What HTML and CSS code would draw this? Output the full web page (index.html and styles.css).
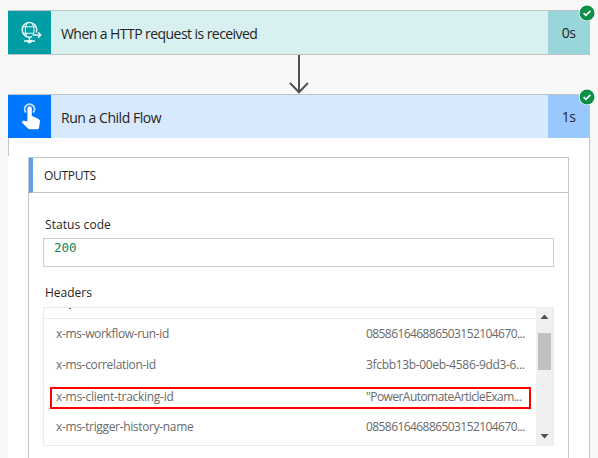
FILE: index.html
```html
<!DOCTYPE html>
<html lang="en">
<head>
<meta charset="utf-8">
<title>Flow run</title>
<link rel="stylesheet" href="styles.css">
</head>
<body>
<main class="flow">
  <section class="card trigger">
    <div class="icon">
      <svg width="43" height="43" viewBox="0 0 43 43" fill="none" stroke="#e4f8f7" stroke-width="1.4">
        <path d="M28.300 21.500A7.300 7.300 0 1 0 24 25.700"/>
        <path d="M19 12c-2 4.200-2 9.800 0 14M24 12c2 3.500 2.400 7 1.800 10.500M14.500 15.700h13.500M14.500 22.200h11.500" stroke-width="1.100"/>
        <path d="M24.500 24h8M30 21.300l2.800 2.700-2.800 2.700"/>
        <path d="M21.500 26v3" stroke-width="1.600"/>
        <path d="M16 30h3M24 30h3" stroke-width="1.600"/>
        <path d="M18.800 29h5.400v2l-2.700 1.800-2.700-1.800z" fill="#e4f8f7" stroke="none"/>
      </svg>
    </div>
    <h2 class="title title-http">When a HTTP request is received</h2>
    <div class="time">0s</div>
    <svg class="check" width="18" height="18" viewBox="0 0 18 18"><circle cx="9" cy="9" r="8.300" fill="#fff"/><circle cx="9" cy="9" r="7.500" fill="#0b9048"/><path d="M5.600 9.200l2.300 2.200 4.500-4.500" fill="none" stroke="#fff" stroke-width="1.700"/></svg>
  </section>
  <div class="connector">
    <svg width="22" height="39" viewBox="0 0 22 39" fill="none" stroke="#505050" stroke-width="2"><path d="M11 0v37M2 28l9 9.300 9-9.300"/></svg>
  </div>
  <section class="card action">
    <div class="icon">
      <svg width="43" height="43" viewBox="0 0 43 43" fill="#fff">
        <path d="M18 17.500A4.900 4.900 0 1 1 25.200 17.500" fill="none" stroke="#c5e0ff" stroke-width="1.900"/>
        <path d="M19.400 13.400a2.200 2.200 0 0 1 4.400 0v7.900h1l5.700 2.800c1 .5 1.500 1.300 1.400 2.300l-.8 6c-.2 1.200-1 1.900-2.100 1.900h-7.300c-.7 0-1.200-.2-1.700-.7l-6.300-6.300 1-1.200c.4-.4.9-.5 1.400-.4l3.300.8z"/>
      </svg>
    </div>
    <h2 class="title title-child">Run a Child Flow</h2>
    <div class="time">1s</div>
    <svg class="check" width="18" height="18" viewBox="0 0 18 18"><circle cx="9" cy="9" r="8.300" fill="#fff"/><circle cx="9" cy="9" r="7.500" fill="#0b9048"/><path d="M5.600 9.200l2.300 2.200 4.500-4.500" fill="none" stroke="#fff" stroke-width="1.700"/></svg>
  </section>
  <div class="body">
    <section class="panel">
      <h3 class="panel-head"><span>OUTPUTS</span></h3>
      <div class="fields">
        <div class="label label-status">Status code</div>
        <div class="value">200</div>
        <div class="label label-headers">Headers</div>
        <div class="list">
          <div class="rows">
            <div class="row-cut"><div class="descender"></div></div>
            <div class="row"><span class="key">x-ms-workflow-run-id</span><span class="digits">085861646886503152104670...</span></div>
            <div class="row"><span class="key">x-ms-correlation-id</span><span class="guid">3fcbb13b-00eb-4586-9dd3-6...</span></div>
            <div class="row marked"><span class="key tracking">x-ms-client-tracking-id</span><span class="words">"PowerAutomateArticleExam...</span></div>
            <div class="row"><span class="key">x-ms-trigger-history-name</span><span class="digits">085861646886503152104670...</span></div>
          </div>
          <div class="scrollbar">
            <svg width="9" height="5" viewBox="0 0 9 5"><path d="M.5 5l4-4.500 4 4.500z" fill="#505050"/></svg>
            <div class="thumb"></div>
            <svg class="down" width="9" height="5" viewBox="0 0 9 5"><path d="M.5 0l4 4.500 4-4.500z" fill="#505050"/></svg>
          </div>
        </div>
      </div>
    </section>
  </div>
</main>
</body>
</html>
```
FILE: styles.css
```css
* { box-sizing: border-box; }
body {
  margin: 0;
  height: 458px;
  overflow: hidden;
  background: #f8f8f8;
  color: #252423;
  font-family: "Open Sans", "Noto Sans", sans-serif;
}
h2, h3 { margin: 0; font-weight: 400; }
svg { display: block; }
.flow { width: 582px; margin-left: 8px; padding-top: 10px; }
.card {
  position: relative;
  display: flex;
  height: 45px;
  border: 1px solid #bfc3c4;
  border-left: 0;
}
.icon { width: 43px; flex: none; }
.title { flex: 1; padding-left: 10px; font-size: 14px; line-height: 45px; white-space: nowrap; }
.title-http { letter-spacing: -0.56px; }
.title-child { letter-spacing: -0.47px; }
.time { width: 41px; font-size: 14px; line-height: 43px; text-align: center; letter-spacing: -0.7px; }
.action .time { line-height: 44px; }
.check { position: absolute; right: -7px; top: -7px; }
.trigger { background: #d8f0ef; }
.trigger .icon { background: #009da5; }
.trigger .time { background: #99d6da; }
.action { height: 44px; border-bottom: 0; background: #d7eafd; }
.action .icon { background: #0077ff; }
.action .time { background: #99c8ff; }
.connector { height: 39px; padding-left: 280px; }
.body {
  height: 320px;
  padding: 19px 20px 0;
  border-right: 1px solid #c4c4c4;
  background: linear-gradient(#c4c4c4, #c4c4c4) 0 0 / 1px 18px no-repeat #fff;
}
.panel { width: 541px; height: 320px; border: 1px solid #c4c4c4; }
.panel-head {
  height: 35px;
  padding-left: 11px;
  border-left: 4px solid #5ca0e8;
  border-bottom: 1px solid #c4c4c4;
  font-size: 12px;
  line-height: 35px;
  letter-spacing: -0.3px;
}
.fields { padding: 22px 14px 0; }
.label { height: 23px; padding-left: 2px; font-size: 12px; line-height: 19px; font-weight: 500; }
.label-status { letter-spacing: 0.08px; }
.label-headers { height: 24px; margin-top: 16px; }
.value {
  height: 29px;
  padding-left: 10px;
  border: 1px solid #ccc;
  color: #098658;
  font-family: "DejaVu Sans Mono", monospace;
  font-size: 12.5px;
  line-height: 18px;
}
.list { display: flex; width: 511px; height: 139px; border: 1px solid #eee9ea; }
.rows { width: 492px; flex: none; }
.row-cut { height: 11px; padding-left: 25px; border-bottom: 1px solid #ece7e8; }
.descender { width: 2px; height: 1px; background: #666; }
.row {
  display: flex;
  height: 31px;
  padding-left: 12px;
  color: #6a6a6a;
  font-size: 12px;
  line-height: 30px;
  white-space: nowrap;
}
.key { flex: none; width: 310px; letter-spacing: -0.34px; }
.tracking { letter-spacing: -0.28px; }
.digits { letter-spacing: -0.57px; }
.guid { letter-spacing: -0.33px; }
.words { letter-spacing: -0.55px; }
.marked { height: 22px; width: 481px; margin: 6px 0 3px 6px; padding-left: 4px; border: 2px solid #f00; line-height: 15px; }
.scrollbar {
  width: 18px;
  padding-top: 6px;
  display: flex;
  flex-direction: column;
  align-items: center;
  background: #f0f0f0;
}
.thumb { width: 13px; height: 37px; margin-top: 14px; background: #c1c1c1; }
.down { margin-top: auto; margin-bottom: 6px; }
```
